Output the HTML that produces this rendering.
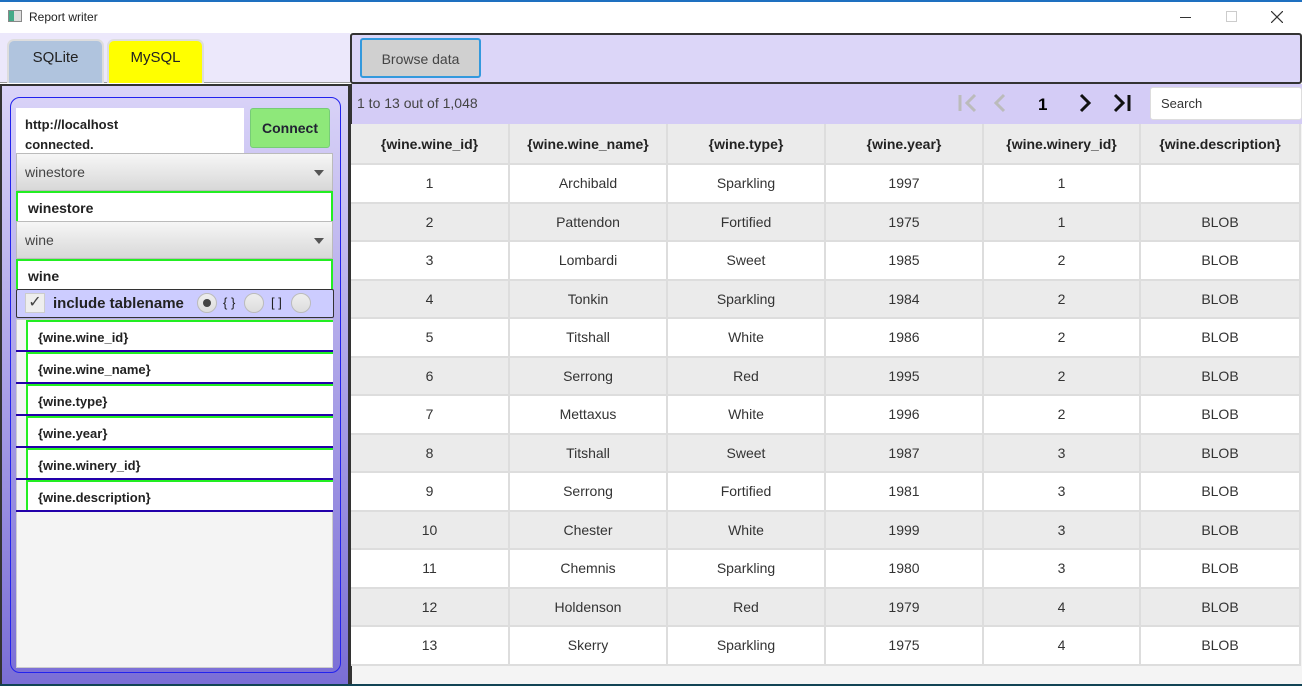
<!DOCTYPE html><html><head><style>
*{box-sizing:border-box;margin:0;padding:0}
body{width:1302px;height:686px;overflow:hidden;background:#fff;font-family:"Liberation Sans","DejaVu Sans",sans-serif;position:relative;font-size:14px;color:#222}
.a{position:absolute}
.b{font-weight:bold}
table{border-collapse:collapse;table-layout:fixed}
td,th{text-align:center;border-right:2px solid #ddd;border-bottom:2px solid #ddd;height:38.5px;font-size:14px;color:#333}
th{height:40px;font-weight:bold;color:#222;background:#ebebeb}
tr:nth-child(odd) td{background:#ebebeb}
.it{position:absolute;left:16px;width:317px;height:32px;border-bottom:2px solid #2200aa}
.it div{position:absolute;left:10px;top:0;right:0;bottom:0;border-left:2px solid #22ee22;border-top:2px solid #22ee22;background:#fff;padding:8px 0 0 10px;font-weight:bold;font-size:13px}
.cb{position:absolute;left:16px;width:317px;height:38px;background:linear-gradient(#f6f6f6,#d8d8d8);border:1px solid #bbb;padding:10px 8px;color:#444}
.cb:after{content:"";position:absolute;right:8px;top:16px;border:5px solid transparent;border-top:6px solid #555}
.tf{position:absolute;left:16px;width:317px;height:30px;background:#fff;border:2px solid #22ee22;border-bottom:none;padding:7px 10px;font-weight:bold}
.rd{position:absolute;top:4px;width:20px;height:20px;border-radius:50%;background:linear-gradient(#eee,#ddd);border:1px solid #bbb}
</style></head><body>
<div class="a" style="left:0;top:0;width:1302px;height:2px;background:#1e70c0"></div>
<div class="a" style="left:8px;top:10px;width:14px;height:12px;border:1px solid #888;background:linear-gradient(90deg,#4a8 40%,#ddd 40%)"></div>
<div class="a" style="left:29px;top:10px;font-size:12px">Report writer</div>
<div class="a" style="left:1180px;top:17px;width:11px;height:1px;background:#333"></div>
<div class="a" style="left:1226px;top:11px;width:11px;height:11px;border:1px solid #ccc"></div>
<svg class="a" style="left:1271px;top:11px" width="12" height="12"><path d="M0 0L12 12M12 0L0 12" stroke="#333" stroke-width="1.2"/></svg>
<!-- left -->
<div class="a" style="left:0;top:33px;width:350px;height:50px;background:#ece8fb;border-bottom:1px solid #999"></div>
<div class="a" style="left:7px;top:39px;width:97px;height:44px;background:#b0c4de;border:2px solid #ddd;border-bottom:none;border-radius:7px 7px 0 0;text-align:center;padding-top:8px;font-size:15px">SQLite</div>
<div class="a" style="left:107px;top:39px;width:97px;height:44px;background:#ffff00;border:2px solid #ddd;border-bottom:none;border-radius:7px 7px 0 0;text-align:center;padding-top:8px;font-size:15px">MySQL</div>
<div class="a" style="left:0;top:84px;width:350px;height:602px;background:linear-gradient(#dad4f8,#7a6ed6);border:2px solid #333"></div>
<div class="a" style="left:10px;top:97px;width:331px;height:576px;border:1.5px solid #2222ee;border-radius:10px"></div>
<div class="a" style="left:16px;top:319px;width:317px;height:349px;background:#f4f4f4;border:1px solid #ccc"></div>
<div class="a" style="left:16px;top:108px;width:228px;height:45px;background:#fff;padding:7px 9px;font-weight:bold;font-size:13px;line-height:20px">http://localhost<br>connected.</div>
<div class="a" style="left:250px;top:108px;width:80px;height:40px;background:#8ee87a;border:1px solid #7c7;border-radius:3px;text-align:center;padding-top:11px;font-weight:bold;font-size:14px;color:#223">Connect</div>
<div class="cb" style="top:153px">winestore</div>
<div class="tf" style="top:191px">winestore</div>
<div class="cb" style="top:221px">wine</div>
<div class="tf" style="top:259px">wine</div>
<div class="a" style="left:16px;top:289px;width:318px;height:29px;background:#ccccff;border:1px solid #333;border-radius:2px"></div>
<div class="a" style="left:25px;top:293px;width:20px;height:20px;background:#eee;border:1px solid #ccc;font-size:16px;line-height:18px;text-align:center;color:#444">✓</div>
<div class="a b" style="left:53px;top:295px;font-size:15px">include tablename</div>
<div class="rd" style="left:197px;top:293px"><div style="margin:5px;width:8px;height:8px;border-radius:50%;background:#444"></div></div>
<div class="a" style="left:223px;top:295px;font-size:13px">{ }</div>
<div class="rd" style="left:244px;top:293px"></div>
<div class="a" style="left:271px;top:295px;font-size:13px">[ ]</div>
<div class="rd" style="left:291px;top:293px"></div>
<div class="it" style="top:320px"><div>{wine.wine_id}</div></div>
<div class="it" style="top:352px"><div>{wine.wine_name}</div></div>
<div class="it" style="top:384px"><div>{wine.type}</div></div>
<div class="it" style="top:416px"><div>{wine.year}</div></div>
<div class="it" style="top:448px"><div>{wine.winery_id}</div></div>
<div class="it" style="top:480px"><div>{wine.description}</div></div>
<!-- right -->
<div class="a" style="left:350px;top:33px;width:952px;height:51px;background:#dcd6f8;border:2px solid #333;border-radius:3px"></div>
<div class="a" style="left:360px;top:38px;width:121px;height:40px;background:#d0d0d0;border:2px solid #39d;border-radius:3px;text-align:center;padding-top:11px;color:#444">Browse data</div>
<div class="a" style="left:350px;top:84px;width:952px;height:602px;background:#f4f4f4;border-left:2px solid #333"></div>
<div class="a" style="left:352px;top:84px;width:950px;height:40px;background:#d4ccf6"></div>
<div class="a" style="left:357px;top:95px;color:#444">1 to 13 out of 1,048</div>
<svg class="a" style="left:955px;top:92px" width="180" height="22"><g fill="none" stroke-width="3"><path d="M5 3v16M20 3l-8 8 8 8M49 3l-8 8 8 8" stroke="#bbb"/><path d="M126 3l8 8-8 8M160 3l8 8-8 8M174 3v16" stroke="#111"/></g><text x="83" y="18" font-weight="bold" font-size="17" font-family="Liberation Sans">1</text></svg>
<div class="a" style="left:1150px;top:87px;width:152px;height:33px;background:#fff;border:1px solid #ddd;border-radius:3px;padding:8px 10px;font-size:13px;color:#333">Search</div>
<table class="a" style="left:351px;top:124px;width:949px;background:#fff">
<colgroup><col width="158"><col width="158"><col width="158"><col width="158"><col width="157"><col width="160"></colgroup>
<tr><th>{wine.wine_id}</th><th>{wine.wine_name}</th><th>{wine.type}</th><th>{wine.year}</th><th>{wine.winery_id}</th><th>{wine.description}</th></tr>
<tr><td>1</td><td>Archibald</td><td>Sparkling</td><td>1997</td><td>1</td><td></td></tr>
<tr><td>2</td><td>Pattendon</td><td>Fortified</td><td>1975</td><td>1</td><td>BLOB</td></tr>
<tr><td>3</td><td>Lombardi</td><td>Sweet</td><td>1985</td><td>2</td><td>BLOB</td></tr>
<tr><td>4</td><td>Tonkin</td><td>Sparkling</td><td>1984</td><td>2</td><td>BLOB</td></tr>
<tr><td>5</td><td>Titshall</td><td>White</td><td>1986</td><td>2</td><td>BLOB</td></tr>
<tr><td>6</td><td>Serrong</td><td>Red</td><td>1995</td><td>2</td><td>BLOB</td></tr>
<tr><td>7</td><td>Mettaxus</td><td>White</td><td>1996</td><td>2</td><td>BLOB</td></tr>
<tr><td>8</td><td>Titshall</td><td>Sweet</td><td>1987</td><td>3</td><td>BLOB</td></tr>
<tr><td>9</td><td>Serrong</td><td>Fortified</td><td>1981</td><td>3</td><td>BLOB</td></tr>
<tr><td>10</td><td>Chester</td><td>White</td><td>1999</td><td>3</td><td>BLOB</td></tr>
<tr><td>11</td><td>Chemnis</td><td>Sparkling</td><td>1980</td><td>3</td><td>BLOB</td></tr>
<tr><td>12</td><td>Holdenson</td><td>Red</td><td>1979</td><td>4</td><td>BLOB</td></tr>
<tr><td>13</td><td>Skerry</td><td>Sparkling</td><td>1975</td><td>4</td><td>BLOB</td></tr>
</table>
<div class="a" style="left:0;top:684px;width:1302px;height:2px;background:#145"></div>
</body></html>
